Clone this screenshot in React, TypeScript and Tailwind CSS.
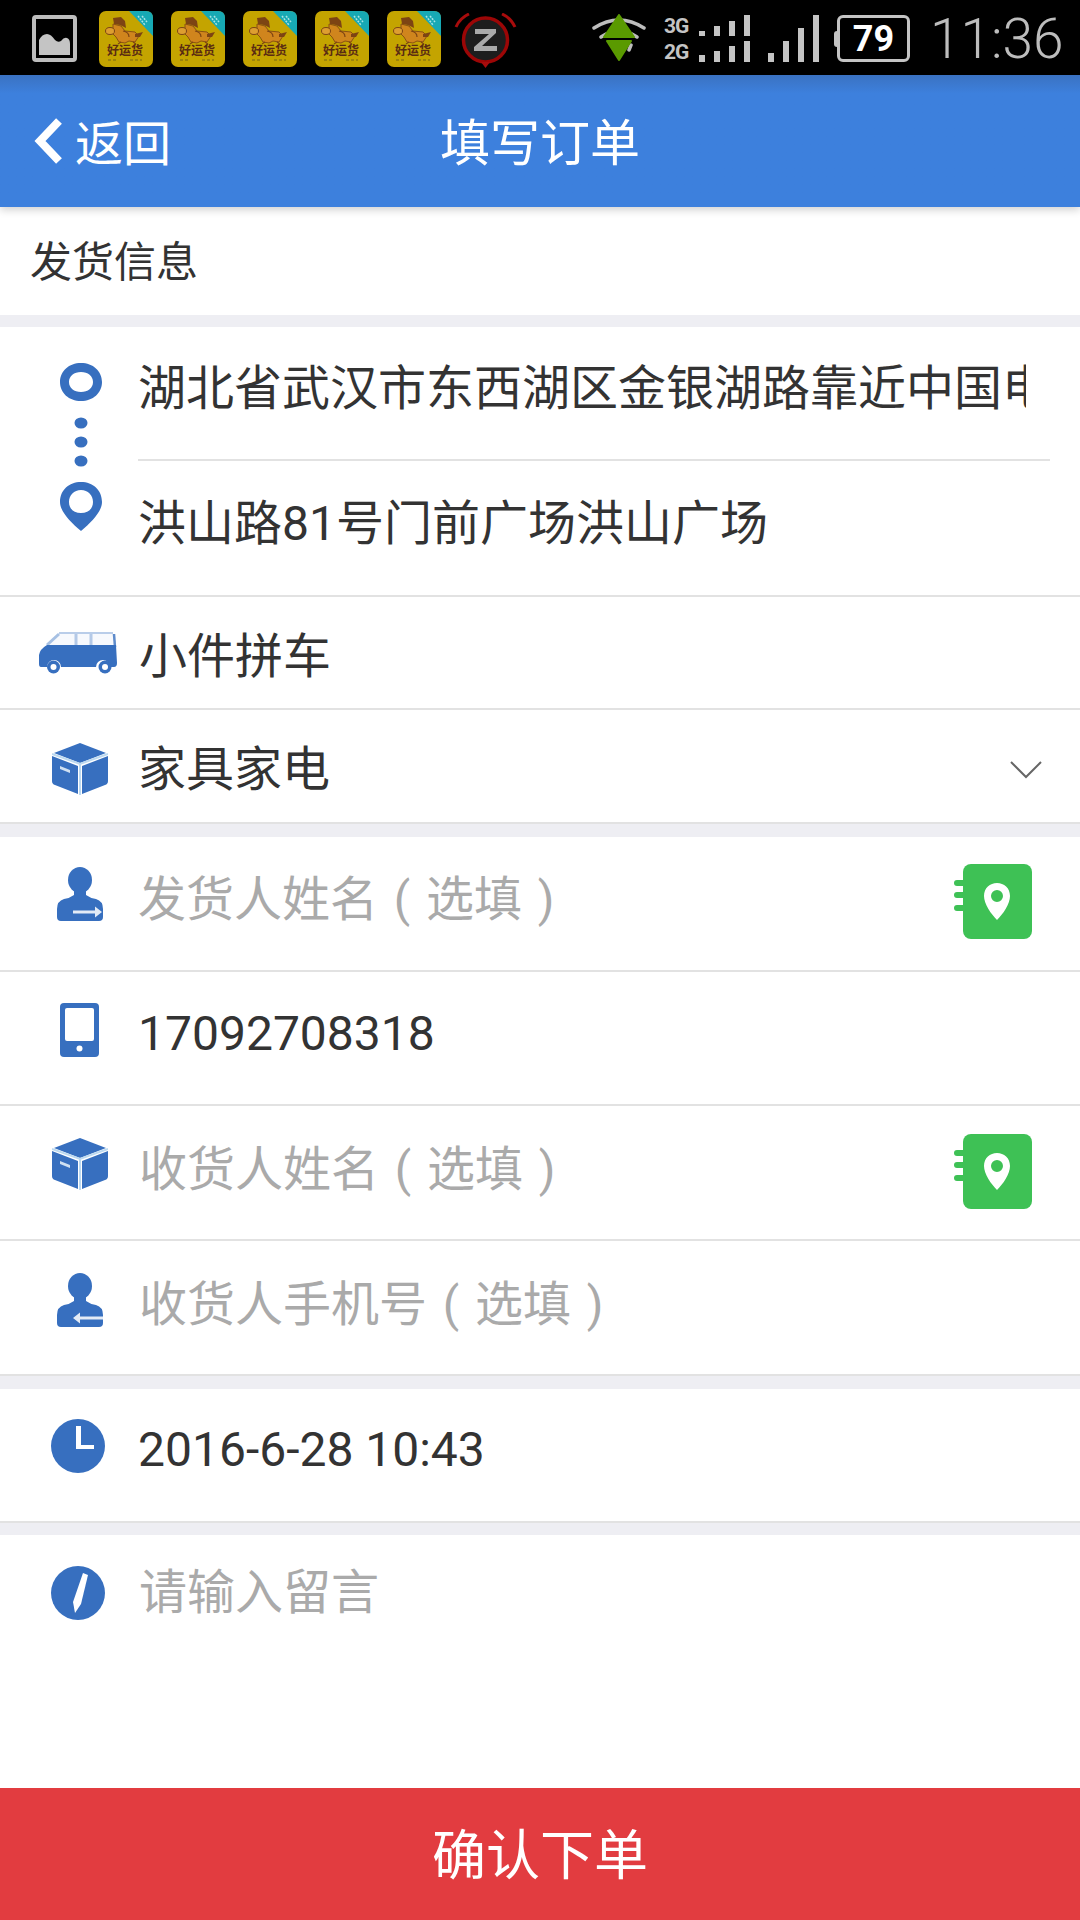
const BLUE = "#376fbf";

function AppIcon() {
  return (
    <svg width="54" height="56" viewBox="0 0 54 56" className="shrink-0">
      <rect width="54" height="56" rx="7" fill="#c4a400" />
      <path d="M30 0H47Q54 0 54 7V25Z" fill="#17a9b4" />
      <path d="M43 5l5 6M39 5l7 9" stroke="#a8e4e4" strokeWidth="1.5" strokeDasharray="2 1" />
      {/* horse */}
      <path d="M14 13l8 2 4 5 10 1 4 4-4 6-6-1-4 2-6-1-3-5-3-3z" fill="#d0851d" stroke="#8a5212" strokeWidth="1" />
      <path d="M14 7l8-1 4 4 1 7-6-3-6-1z" fill="#7d4413" />
      <ellipse cx="11" cy="20" rx="4.5" ry="3.5" fill="#dd9e30" stroke="#7d4413" strokeWidth="1" />
      <path d="M36 23l8-2-3 5-5 0z" fill="#7d4413" />
      <path d="M24 20q6 1 6 6M22 31l-3 2M34 31l3 2" fill="none" stroke="#7d4413" strokeWidth="1.2" />
      <text x="26" y="44" textAnchor="middle" fontSize="12" fontWeight="700" fill="#5b2c12" fontFamily="'Noto Sans CJK SC', sans-serif">好运货</text>
      <path d="M9 49h9M31 49h12" stroke="#8f7a10" strokeWidth="1.5" strokeDasharray="3 2" />
    </svg>
  );
}

function StatusBar() {
  return (
    <div className="h-[75px] bg-black flex items-start shrink-0">
      {/* gallery notification */}
      <svg width="45" height="47" viewBox="0 0 45 47" className="ml-[32px] mt-[15px] shrink-0">
        <rect x="2" y="2" width="41" height="43" rx="2" fill="none" stroke="#bdbdbd" strokeWidth="4" />
        <path d="M7 40V25q3-6 8-6 4 0 8 6 3 3 6 1 3-4 6-3 3 1 3 6v11z" fill="#c4c4c4" />
      </svg>
      <div className="flex gap-[18px] ml-[22px] mt-[11px]">
        <AppIcon />
        <AppIcon />
        <AppIcon />
        <AppIcon />
        <AppIcon />
      </div>
      {/* alarm */}
      <svg width="63" height="55" viewBox="0 0 63 55" className="ml-[13px] mt-[13px] shrink-0">
        <path d="M2 14Q6 5 15 1M61 14Q57 5 48 1" fill="none" stroke="#a80c0c" strokeWidth="3" />
        <circle cx="31.5" cy="27" r="22" fill="#1d1d1d" stroke="#9c0606" strokeWidth="3.5" />
        <path d="M27 49h9l-4.5 6z" fill="#a80c0c" />
        <path d="M21 16h21v4L28 33h15v5H20v-4l15-13H21z" fill="#a9a9a9" />
      </svg>
      {/* wifi */}
      <svg width="54" height="47" viewBox="0 0 54 47" className="ml-[75px] mt-[14px] shrink-0">
        <path d="M2 14Q27-2 52 14M9 23Q27 11 45 23M39 31l-2 5" fill="none" stroke="#bdbdbd" strokeWidth="3.5" strokeLinecap="round" />
        <path d="M27 1l15 22H12z" fill="#5a9a00" stroke="#5a9a00" strokeLinejoin="round" strokeWidth="2" />
        <path d="M15 27h24L27 46z" fill="#5a9a00" stroke="#5a9a00" strokeLinejoin="round" strokeWidth="2" />
      </svg>
      <div className="ml-[18px] mt-[13px] w-[28px] flex flex-col text-[#c4c4c4] font-['Roboto',sans-serif] font-bold text-[21px] leading-[26px] tracking-[-1px]">
        <span>3G</span>
        <span>2G</span>
      </div>
      {/* signal bars */}
      <svg width="120" height="47" viewBox="0 0 120 47" className="ml-[7px] mt-[15px] shrink-0" fill="#c4c4c4">
        <path d="M0 16h6v5H0zM15 11h6v10h-6zM30 6h6v15h-6zM45 0h6v21h-6z" />
        <path d="M0 40h6v7H0zM15 36h6v11h-6zM30 31h6v16h-6zM45 26h6v21h-6z" />
        <path d="M69 38h6v9h-6zM84 26h6v21h-6zM99 13h6v34h-6zM114 0h6v47h-6z" />
      </svg>
      {/* battery */}
      <div className="ml-[15px] mt-[15px] flex items-center shrink-0">
        <div className="w-[3px] h-[16px] bg-[#c4c4c4] rounded-l-sm" />
        <div className="w-[73px] h-[47px] rounded-[6px] border-[3px] border-[#c4c4c4] flex items-center justify-center text-white font-['Roboto',sans-serif] font-bold text-[36px] leading-none">
          79
        </div>
      </div>
      <div className="ml-[20px] mt-[9px] text-[#bdbdbd] font-['Roboto',sans-serif] font-light text-[55px] leading-[60px] whitespace-nowrap">
        11:36
      </div>
    </div>
  );
}

function Header() {
  return (
    <div className="h-[132px] shrink-0 bg-linear-to-b from-[#3a72c2] to-[#3d80dd] to-[14%] grid grid-cols-[1fr_auto_1fr] items-center text-white z-10 shadow-[0_3px_8px_rgba(0,0,0,0.18)] relative">
      <div className="flex items-center pl-[33px]">
        <svg width="30" height="46" viewBox="0 0 30 46">
          <path d="M26 3L7 23l19 20" fill="none" stroke="#fff" strokeWidth="8" />
        </svg>
        <span className="ml-[12px] text-[48px] leading-[60px] -mt-[2px]">返回</span>
      </div>
      <div className="text-[50px] leading-[60px] -mt-[4px]">填写订单</div>
      <div />
    </div>
  );
}

function Ring() {
  return (
    <svg width="42" height="168" viewBox="0 0 42 168" fill={BLUE}>
      <path fillRule="evenodd" d="M21 0c12 0 21 8 21 19s-9 19-21 19S0 30 0 19 9 0 21 0zm0 9c-7 0-12 4-12 10s5 10 12 10 12-4 12-10S28 9 21 9z" />
      <ellipse cx="21" cy="60" rx="6.5" ry="5.5" />
      <ellipse cx="21" cy="79" rx="6.5" ry="5.5" />
      <ellipse cx="21" cy="98" rx="6.5" ry="5.5" />
      <path fillRule="evenodd" d="M21 119c12 0 21 8 21 20 0 9-10 20-21 29C10 159 0 148 0 139c0-12 9-20 21-20zm0 8c-7 0-12 5-12 12s5 11 12 11 12-4 12-11-5-12-12-12z" />
    </svg>
  );
}

function Van() {
  return (
    <svg width="78" height="42" viewBox="0 0 78 42" fill={BLUE}>
      {/* window band, pale against the white */}
      <path d="M20 1h54l2 14H7z" fill="#f7f9fd" />
      <path d="M20 1h54" stroke="#b9cde9" strokeWidth="2" />
      <path d="M37 2v12M52 2v12" stroke="#b4c9e7" strokeWidth="3" />
      <path d="M20 2L8 13" stroke="#a6c0e3" strokeWidth="3" />
      <path d="M75 2l1 13" stroke={BLUE} strokeWidth="2.5" opacity="0.8" />
      <path d="M8 13l10 0h59l1 18q0 4-3 4h-4a7 7 0 0 0-14 0H22a7 7 0 0 0-14 0H2q-2 0-2-3v-9q1-6 8-10z" />
      <circle cx="14.5" cy="35" r="6.5" />
      <circle cx="66" cy="35" r="6.5" />
      <circle cx="14.5" cy="35" r="3" fill="#fff" />
      <circle cx="66" cy="35" r="3" fill="#fff" />
    </svg>
  );
}

function BoxIcon() {
  return (
    <svg width="56" height="52" viewBox="0 0 56 52" fill={BLUE}>
      <path d="M28 0l26 10-26 10L2 10z" />
      <path d="M0 13l26 10v28L3 42q-3-1-3-4z" />
      <path d="M56 13L30 23v28l23-9q3-1 3-4z" />
      <path d="M8 23l10 4v3L8 26z" fill="#cfe0f2" />
      <path d="M0 11l28 10 28-10M28 21v31" fill="none" stroke="#bcd9f0" strokeWidth="2" />
    </svg>
  );
}

function Person({ flip }: { flip?: boolean }) {
  return (
    <svg width="46" height="54" viewBox="0 0 46 54" fill={BLUE}>
      <ellipse cx="23" cy="13" rx="12" ry="13" />
      <path d="M17 24h12v4q4 3 10 4 7 2 7 10v8q0 4-4 4H4q-4 0-4-4v-8q0-8 7-10 6-1 10-4z" />
      {flip ? (
        <path d="M46 46.5v-3H23v-4l-7 5.5 7 5.5v-4z" fill="#e3ebf6" />
      ) : (
        <path d="M16 43.5v3h22v4l7-5.5-7-5.5v4z" fill="#e3ebf6" />
      )}
    </svg>
  );
}

function Phone() {
  return (
    <svg width="39" height="54" viewBox="0 0 39 54">
      <rect width="39" height="54" rx="4" fill={BLUE} />
      <rect x="5" y="5" width="29" height="33" rx="2" fill="#fff" />
      <circle cx="19.5" cy="45.5" r="3" fill="#fff" />
    </svg>
  );
}

function Clock() {
  return (
    <svg width="54" height="54" viewBox="0 0 54 54">
      <circle cx="27" cy="27" r="27" fill={BLUE} />
      <path d="M25 7h5v19h13v4H25z" fill="#fff" />
    </svg>
  );
}

function Pen() {
  return (
    <svg width="54" height="54" viewBox="0 0 54 54">
      <circle cx="27" cy="27" r="27" fill={BLUE} />
      <path d="M32 7l5 2-7 29-6 9-2-11z" fill="#fff" />
    </svg>
  );
}

function Contacts() {
  return (
    <svg width="78" height="75" viewBox="0 0 78 75" className="shrink-0">
      <rect x="9" width="69" height="75" rx="8" fill="#3ec155" />
      <rect y="16" width="12" height="6" rx="3" fill="#3ec155" />
      <rect y="28" width="12" height="6" rx="3" fill="#3ec155" />
      <rect y="41" width="12" height="6" rx="3" fill="#3ec155" />
      <path fillRule="evenodd" d="M43 19c7 0 13 5 13 13 0 8-7 18-13 24-6-6-13-16-13-24 0-8 6-13 13-13zm0 7a6 6 0 1 0 0 12 6 6 0 0 0 0-12z" fill="#fff" />
    </svg>
  );
}

function Optional() {
  return (
    <>
      <span className="inline-block w-[48px] text-center font-['Roboto',sans-serif]">(</span>
      选填
      <span className="inline-block w-[48px] text-center font-['Roboto',sans-serif]">)</span>
    </>
  );
}

function Band({ className }: { className: string }) {
  return <div className={"shrink-0 bg-[#eeeef3] " + className} />;
}

function Row({
  icon,
  children,
  muted,
  digits,
  right,
  className,
  iconClass,
  textClass,
}: {
  icon: React.ReactNode;
  children: React.ReactNode;
  muted?: boolean;
  digits?: boolean;
  right?: React.ReactNode;
  className: string;
  iconClass: string;
  textClass: string;
}) {
  return (
    <div className={"flex items-start shrink-0 border-b-2 border-[#e2e2e2] bg-white " + className}>
      <div className={"w-[139px] shrink-0 flex " + iconClass}>{icon}</div>
      <div
        className={
          "flex-1 text-[48px] leading-[60px] whitespace-pre " +
          (muted ? "text-[#aaaaaa] " : "text-[#333333] ") +
          (digits ? "font-['Roboto','Noto_Sans_CJK_SC',sans-serif] -ml-[1px] " : "") +
          textClass
        }
      >
        {children}
      </div>
      {right}
    </div>
  );
}

export default function App() {
  return (
    <div className="w-[1080px] h-[1920px] flex flex-col overflow-hidden bg-white font-['Noto_Sans_CJK_SC','Noto_Sans',sans-serif]">
      <StatusBar />
      <Header />

      <div className="h-[108px] shrink-0 flex items-center pl-[30px] pb-[5px] text-[42px] text-[#333333]">发货信息</div>
      <Band className="h-[12px]" />

      {/* route */}
      <div className="h-[270px] shrink-0 flex border-b-2 border-[#e2e2e2]">
        <div className="w-[138px] shrink-0 pl-[60px] pt-[36px]">
          <Ring />
        </div>
        <div className="flex-1 flex flex-col pr-[30px]">
          <div className="h-[134px] shrink-0 border-b-2 border-[#e2e2e2] pt-[27px]">
            <div className="w-[888px] overflow-hidden whitespace-nowrap text-[48px] leading-[60px] text-[#333333]">
              湖北省武汉市东西湖区金银湖路靠近中国电信
            </div>
          </div>
          <div className="pt-[33px] text-[48px] leading-[60px] text-[#333333] font-['Roboto','Noto_Sans_CJK_SC',sans-serif] whitespace-nowrap">
            洪山路81号门前广场洪山广场
          </div>
        </div>
      </div>

      <Row icon={<Van />} className="h-[113px]" iconClass="pl-[39px] pt-[35px]" textClass="pt-[25px]">
        小件拼车
      </Row>
      <Row
        icon={<BoxIcon />}
        className="h-[114px] relative"
        iconClass="pl-[52px] pt-[33px]"
        textClass="pt-[25px] -ml-[1px]"
        right={
          <svg width="32" height="20" viewBox="0 0 32 20" className="mt-[50px] mr-[38px] shrink-0">
            <path d="M1 2l15 15L31 2" fill="none" stroke="#666" strokeWidth="2" />
          </svg>
        }
      >
        家具家电
      </Row>
      <Band className="h-[13px]" />

      <Row
        icon={<Person />}
        muted
        className="h-[135px]"
        iconClass="pl-[57px] pt-[30px]"
        textClass="pt-[28px] -ml-[1px]"
        right={
          <div className="pt-[27px] pr-[48px]">
            <Contacts />
          </div>
        }
      >
        发货人姓名
        <Optional />
      </Row>
      <Row icon={<Phone />} digits className="h-[134px]" iconClass="pl-[60px] pt-[31px]" textClass="pt-[32px]">
        17092708318
      </Row>
      <Row
        icon={<BoxIcon />}
        muted
        className="h-[135px]"
        iconClass="pl-[52px] pt-[32px]"
        textClass="pt-[29px]"
        right={
          <div className="pt-[28px] pr-[48px]">
            <Contacts />
          </div>
        }
      >
        收货人姓名
        <Optional />
      </Row>
      <Row icon={<Person flip />} muted className="h-[135px]" iconClass="pl-[57px] pt-[32px]" textClass="pt-[29px]">
        收货人手机号
        <Optional />
      </Row>
      <Band className="h-[13px]" />

      <Row icon={<Clock />} digits className="h-[134px]" iconClass="pl-[51px] pt-[30px]" textClass="pt-[31px]">
        2016-6-28 10:43
      </Row>
      <Band className="h-[12px]" />

      <div className="flex-1 flex items-start">
        <div className="w-[139px] shrink-0 pl-[51px] pt-[31px]">
          <Pen />
        </div>
        <div className="pt-[23px] text-[48px] leading-[60px] text-[#aaaaaa]">请输入留言</div>
      </div>

      <div className="h-[132px] shrink-0 bg-[#e23c40] flex items-center justify-center text-white text-[54px] pb-[6px]">
        确认下单
      </div>
    </div>
  );
}
